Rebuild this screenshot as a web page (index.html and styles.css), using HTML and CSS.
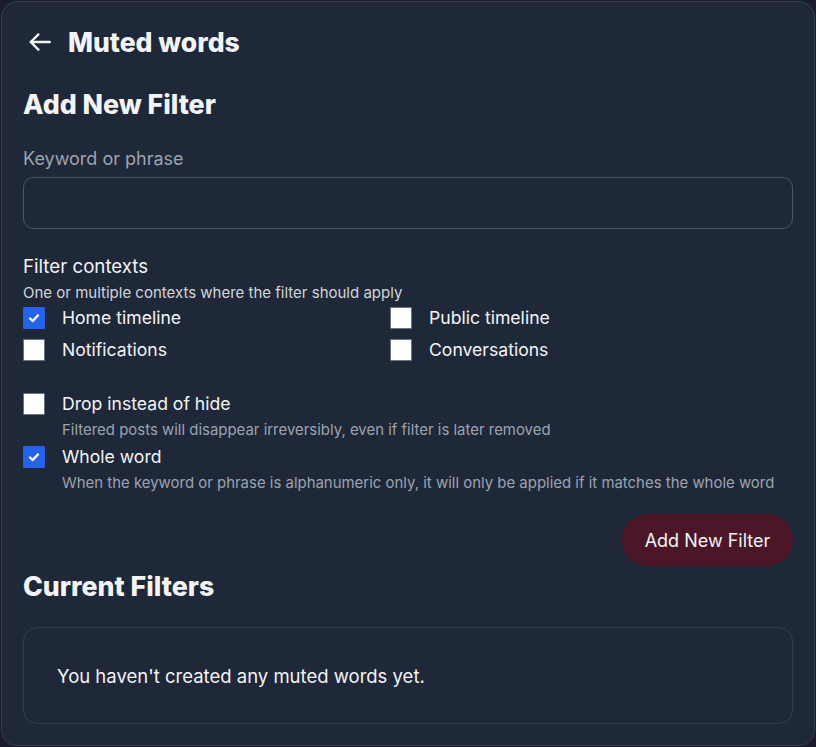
FILE: index.html
```html
<!DOCTYPE html>
<html lang="en">
<head>
<meta charset="utf-8">
<title>Muted words</title>
<link rel="stylesheet" href="styles.css">
</head>
<body>
<main class="card">
  <header class="page-head">
    <button class="back" aria-label="Back">
      <svg width="26" height="26" viewBox="0 0 24 24" fill="none" stroke="currentColor" stroke-width="2.2" stroke-linecap="round" stroke-linejoin="round"><path d="M21 12H3.5"/><path d="M10.5 5l-7 7 7 7"/></svg>
    </button>
    <h1 class="title">Muted words</h1>
  </header>

  <section class="section">
    <h2 class="section-title">Add New Filter</h2>
    <label class="field-label" for="kw">Keyword or phrase</label>
    <input class="text-input" id="kw" type="text">

    <div class="contexts">
      <div class="contexts-title">Filter contexts</div>
      <div class="contexts-sub">One or multiple contexts where the filter should apply</div>
      <div class="ctx-grid">
        <label class="check"><span class="box checked"><svg viewBox="0 0 16 16" width="14" height="14"><path d="M3.5 8.5l3 3 6-6.5" fill="none" stroke="#fff" stroke-width="2.6" stroke-linecap="round" stroke-linejoin="round"/></svg></span><span class="check-label">Home timeline</span></label>
        <label class="check"><span class="box"></span><span class="check-label">Public timeline</span></label>
        <label class="check"><span class="box"></span><span class="check-label">Notifications</span></label>
        <label class="check"><span class="box"></span><span class="check-label">Conversations</span></label>
      </div>
    </div>

    <div class="options">
      <div class="option">
        <label class="check"><span class="box"></span><span class="check-label">Drop instead of hide</span></label>
        <div class="hint">Filtered posts will disappear irreversibly, even if filter is later removed</div>
      </div>
      <div class="option">
        <label class="check"><span class="box checked"><svg viewBox="0 0 16 16" width="14" height="14"><path d="M3.5 8.5l3 3 6-6.5" fill="none" stroke="#fff" stroke-width="2.6" stroke-linecap="round" stroke-linejoin="round"/></svg></span><span class="check-label">Whole word</span></label>
        <div class="hint">When the keyword or phrase is alphanumeric only, it will only be applied if it matches the whole word</div>
      </div>
    </div>

    <div class="actions">
      <button class="primary">Add New Filter</button>
    </div>
  </section>

  <section class="section current">
    <h2 class="section-title">Current Filters</h2>
    <div class="empty">You haven't created any muted words yet.</div>
  </section>
</main>
</body>
</html>
```

FILE: styles.css
```css
* { box-sizing: border-box; }
html, body { margin: 0; padding: 0; }
body {
  background: #1a1b2c;
  font-family: Inter, "Noto Sans", sans-serif;
  color: #f3f4f6;
  width: 816px;
  height: 747px;
  padding: 1px;
}
.card {
  background: #1f2839;
  border: 1px solid #343c4e;
  border-radius: 16px;
  height: 745px;
  padding: 21px 21px 0 21px;
}
.page-head {
  display: flex;
  align-items: center;
  gap: 15px;
  height: 38px;
}
.back {
  background: none;
  border: 0;
  padding: 0;
  color: #f3f4f6;
  display: flex;
  margin-left: 4px;
}
.title {
  margin: 0;
  font-size: 26.5px;
  font-weight: 800;
  color: #f3f4f6;
}
.section-title {
  margin: 0;
  font-size: 26.7px;
  font-weight: 800;
  color: #f3f4f6;
  line-height: 32px;
}
.section { display: flex; flex-direction: column; }
.section > .section-title { margin-top: 27px; }
.field-label {
  margin-top: 27px;
  font-size: 18px;
  color: #9ca3af;
  line-height: 24px;
}
.text-input {
  margin-top: 6px;
  height: 52px;
  width: 100%;
  background: transparent;
  border: 1px solid #4b5563;
  border-radius: 10px;
}
.contexts { margin-top: 26px; }
.contexts-title { font-size: 18.7px; line-height: 24px; color: #f3f4f6; }
.contexts-sub { font-size: 15px; line-height: 20px; color: #d1d5db; margin-top: 4px; }
.ctx-grid {
  display: grid;
  grid-template-columns: 367px 1fr;
  row-gap: 10px;
  margin-top: 4px;
}
.check {
  display: flex;
  align-items: center;
  gap: 17px;
  font-size: 17.6px;
  line-height: 22px;
  color: #f3f4f6;
}
.box {
  width: 22px;
  height: 22px;
  background: #fff;
  border: 1px solid #6b7280;
  border-radius: 1px;
  display: flex;
  align-items: center;
  justify-content: center;
  flex: none;
}
.box.checked { background: #2563eb; border-color: #2563eb; }
.options { margin-top: 32px; display: flex; flex-direction: column; gap: 5px; }
.hint {
  margin-left: 39px;
  margin-top: 4px;
  font-size: 14.95px;
  line-height: 22px;
  color: #9ca3af;
}
.actions { display: flex; justify-content: flex-end; margin-top: 20px; }
.primary {
  background: #4a1628;
  color: #f3f4f6;
  border: 0;
  border-radius: 999px;
  height: 52px;
  width: 171px;
  padding: 0;
  font-family: inherit;
  font-size: 18px;
}
.current > .section-title { margin-top: 4px; }
.empty {
  margin-top: 25px;
  border: 1px solid #343c4e;
  border-radius: 14px;
  height: 97px;
  display: flex;
  align-items: center;
  padding-left: 33px;
  font-size: 18.5px;
  color: #f3f4f6;
}
```
